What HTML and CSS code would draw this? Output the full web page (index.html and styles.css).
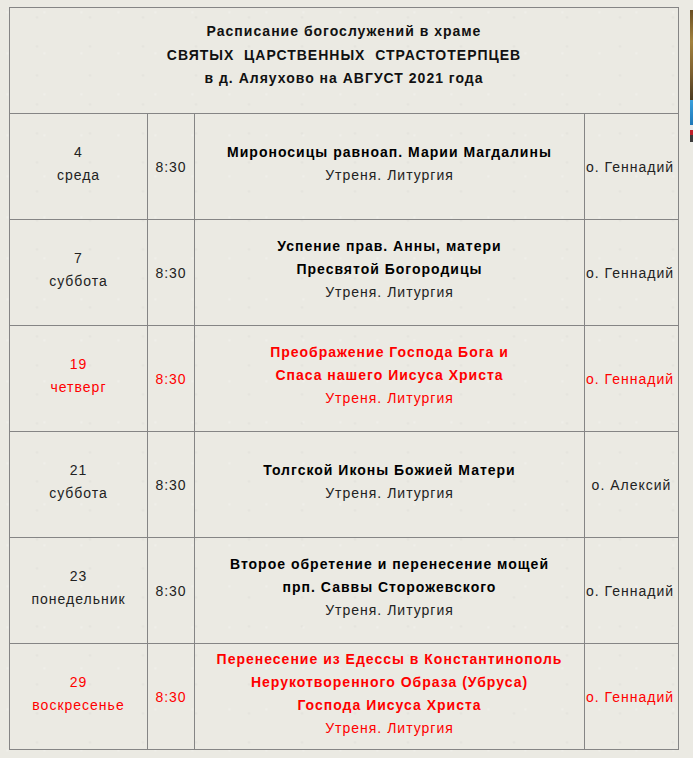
FILE: index.html
```html
<!DOCTYPE html>
<html lang="ru">
<head>
<meta charset="utf-8">
<title>Расписание богослужений</title>
<link rel="stylesheet" href="styles.css">
</head>
<body>
<div class="page">
  <table class="schedule">
    <colgroup>
      <col class="c-date"><col class="c-time"><col class="c-event"><col class="c-priest">
    </colgroup>
    <tr class="head">
      <td colspan="4" class="title">
        <div>Расписание богослужений в храме</div>
        <div>СВЯТЫХ&nbsp; ЦАРСТВЕННЫХ&nbsp; СТРАСТОТЕРПЦЕВ</div>
        <div>в д. Аляухово на АВГУСТ 2021 года</div>
      </td>
    </tr>
    <tr>
      <td class="date"><div>4</div><div>среда</div></td>
      <td class="time">8:30</td>
      <td class="event"><div class="feast">Мироносицы равноап. Марии Магдалины</div><div>Утреня. Литургия</div></td>
      <td class="priest">о. Геннадий</td>
    </tr>
    <tr>
      <td class="date"><div>7</div><div>суббота</div></td>
      <td class="time">8:30</td>
      <td class="event"><div class="feast">Успение прав. Анны, матери</div><div class="feast">Пресвятой Богородицы</div><div>Утреня. Литургия</div></td>
      <td class="priest">о. Геннадий</td>
    </tr>
    <tr class="red">
      <td class="date"><div>19</div><div>четверг</div></td>
      <td class="time">8:30</td>
      <td class="event"><div class="feast">Преображение Господа Бога и</div><div class="feast">Спаса нашего Иисуса Христа</div><div>Утреня. Литургия</div></td>
      <td class="priest">о. Геннадий</td>
    </tr>
    <tr>
      <td class="date"><div>21</div><div>суббота</div></td>
      <td class="time">8:30</td>
      <td class="event"><div class="feast">Толгской Иконы Божией Матери</div><div>Утреня. Литургия</div></td>
      <td class="priest center">о. Алексий</td>
    </tr>
    <tr>
      <td class="date"><div>23</div><div>понедельник</div></td>
      <td class="time">8:30</td>
      <td class="event"><div class="feast">Второе обретение и перенесение мощей</div><div class="feast">прп. Саввы Сторожевского</div><div>Утреня. Литургия</div></td>
      <td class="priest">о. Геннадий</td>
    </tr>
    <tr class="red">
      <td class="date"><div>29</div><div>воскресенье</div></td>
      <td class="time">8:30</td>
      <td class="event"><div class="feast">Перенесение из Едессы в Константинополь</div><div class="feast">Нерукотворенного Образа (Убруса)</div><div class="feast">Господа Иисуса Христа</div><div>Утреня. Литургия</div></td>
      <td class="priest">о. Геннадий</td>
    </tr>
  </table>
  <div class="picture">
    <div class="pic-top"></div>
    <div class="pic-blue"></div>
    <div class="pic-white"></div>
    <div class="pic-red"></div>
    <div class="pic-dark"></div>
  </div>
</div>
</body>
</html>
```

FILE: styles.css
```css
html, body {
  margin: 0;
  padding: 0;
  overflow: hidden;
}
body {
  background-color: #ebeae3;
  background-image:
    radial-gradient(circle at 20% 30%, rgba(255,255,255,0.25) 0, rgba(255,255,255,0) 2px),
    radial-gradient(circle at 70% 60%, rgba(0,0,0,0.03) 0, rgba(0,0,0,0) 2px);
  background-size: 37px 41px, 53px 29px;
  font-family: "Liberation Sans", Arial, sans-serif;
  font-size: 14px;
  letter-spacing: 1px;
  color: #222;
}
.page {
  display: flex;
  align-items: flex-start;
  padding: 7px 0 0 9px;
}
.schedule {
  border-collapse: collapse;
  table-layout: fixed;
  width: 669px;
  flex: none;
}
.c-date { width: 138px; }
.c-time { width: 47px; }
.c-event { width: 390px; }
.c-priest { width: 94px; }
.schedule tr {
  height: 106px;
}
.schedule td {
  border: 1px solid #858585;
  text-align: center;
  vertical-align: middle;
  padding: 0;
  line-height: 23px;
}
.schedule .title {
  font-weight: bold;
  color: #111;
  line-height: 23.5px;
  padding-bottom: 10px;
}
.schedule .date, .schedule .event {
  padding: 1px 0 7px;
}
.schedule .time, .schedule .priest {
  padding-top: 1px;
}
.schedule .priest {
  text-align: left;
  padding-left: 1px;
  white-space: nowrap;
}
.schedule .priest.center {
  text-align: center;
  padding-left: 0;
}
.feast {
  font-weight: bold;
  color: #000;
}
.red td, .red .feast {
  color: #ff0000;
}
.picture {
  flex: none;
  margin: 3px 0 0 11px;
  width: 4px;
  display: flex;
  flex-direction: column;
}
.pic-top {
  height: 90px;
  background: linear-gradient(180deg, #6b5024 0%, #a2823e 35%, #7d6030 70%, #4a3a22 100%);
}
.pic-blue {
  height: 25px;
  background: linear-gradient(180deg, #3aa0dc, #1f78b8);
}
.pic-white { height: 5px; background: #e8e8e8; }
.pic-red { height: 5px; background: #c0202a; }
.pic-dark { height: 7px; background: #3c3c3c; }
```
